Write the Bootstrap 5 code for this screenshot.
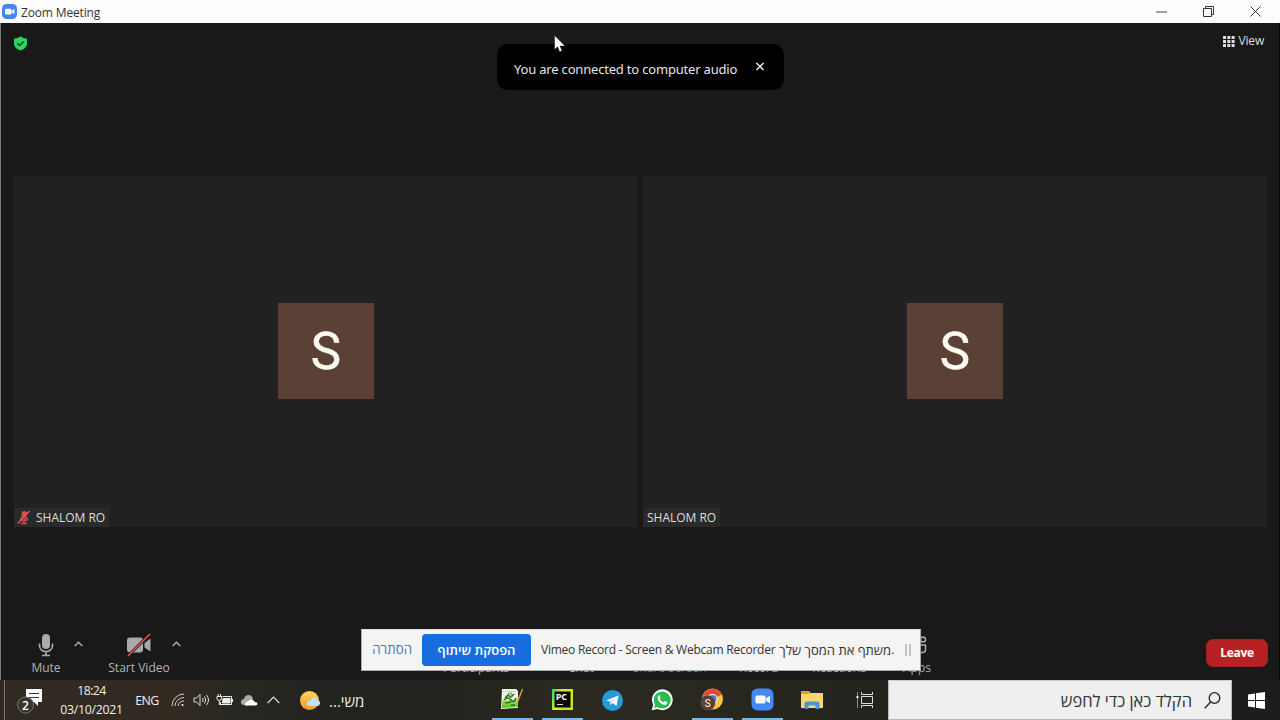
<!DOCTYPE html>
<html lang="en">
<head>
<meta charset="utf-8">
<meta name="viewport" content="width=device-width, initial-scale=1">
<title>Zoom Meeting</title>
<link href="https://cdn.jsdelivr.net/npm/bootstrap@5.3.0/dist/css/bootstrap.min.css" rel="stylesheet">
<style>
body{width:1280px;height:720px;overflow:hidden;background:#191919;font-family:"Open Sans","Noto Sans","Liberation Sans",sans-serif;font-size:12px;line-height:1}
svg{display:block;flex:none}
.titlebar{height:23px;background:#fdfdfd;color:#333;padding:0 1px 0 2px}
.titlebar .caption{font-size:12px;letter-spacing:-.15px;margin-left:4px;padding-top:2px}
.win-btn{width:47px}
.meeting{height:657px;background:#191919;border-left:1px solid #77787c;border-right:1px solid #050505}
.meet-head{height:153px;padding:12px 15px 0 12px}
.view-btn{height:12px;color:#ddd;font-size:12px;letter-spacing:-.2px}
.gallery{height:351px;padding:0 12px 0 13px;gap:5px}
.tile{background:#212121}
.avatar{width:96px;height:96px;margin-bottom:1px;background:#5b4036;color:#fffaf2;font:51px/98px Roboto,sans-serif;-webkit-text-stroke:.5px #fffaf2;text-align:center}
.tag{height:19px;background:#2a2a2a;color:#ddd;font-size:12px;letter-spacing:-.02px;padding:0 4px}
.controls{height:153px;padding:0 11px 5px 13px}
.ctl{color:#b4b4b4;font-size:12px;font-weight:500}
.ctl .lbl{height:13px;letter-spacing:.02px;white-space:nowrap}
.leave{width:62px;height:28px;background:#b62124;border:1px solid #a02022;border-radius:7px;color:#fff;font-size:12px;font-weight:700;line-height:1;margin-bottom:8px;letter-spacing:-.3px}
.notice{left:497px;top:44px;width:287px;height:46px;background:#000;border-radius:11px;color:#e4e4e4;font-family:"Noto Sans",sans-serif;font-size:13px;letter-spacing:-.19px;padding-left:17px}
.notice .msg{width:232px;padding-top:4px;white-space:nowrap}
.pointer{left:554px;top:35px}
.covered{left:440px;top:660px;width:500px;height:16px;color:#aaa;font-size:12px}
.covered span{position:absolute;top:2px;white-space:nowrap}
.sharebar{left:361px;top:629px;width:560px;height:42px;background:#f4f4f4;border:1px solid #aaa;border-top-color:#ddd;color:#333;padding-left:10px;font-size:12px}
.hide-link{color:#4a76c2;width:40px;font-size:13.3px;white-space:nowrap}
.stop-btn{width:109px;height:32px;margin-left:10px;background:#176ce0;border-radius:4px;color:#fff;font-size:13px;font-weight:600;white-space:nowrap}
.share-text{margin-left:10px;width:354px;white-space:nowrap}
.share-text .en{letter-spacing:-.24px}
.share-text .he{font-size:13px}
.taskbar{height:40px;color:#eee;background:linear-gradient(90deg,#302a23,#332b22 13%,#292721 18%,#21231f 26%,#222420 32%,#26251e 39%,#2c2921 46%,#29281f 55%,#23241e 67%,#1c1e1d 96%,#1c1e1e)}
.cell{flex:none;display:flex;align-items:center;justify-content:center;height:40px}
.app{width:50px;padding:0}
.running{border-bottom:2px solid #76b9ed;width:41px;margin:0 4.5px}
.search{width:344px;height:40px;background:#efefef;border:1px solid #b8b8b8;border-top-color:#ccc;color:#333;padding-right:10px;font-size:16.5px}
</style>
</head>
<body class="position-relative">
<header class="titlebar d-flex align-items-center">
  <svg width="15" height="15" viewBox="0 0 15 15"><rect width="15" height="15" rx="4.5" fill="#4287f0"/><rect x="3" y="4.7" width="6.5" height="5.8" rx="1.2" fill="#fff"/><path d="M10 6.7l2.4-1.6v5L10 8.6z" fill="#fff"/></svg>
  <span class="caption me-auto">Zoom Meeting</span>
  <div class="win-btn d-flex justify-content-center"><svg width="11" height="11"><path d="M0 6h11" stroke="#444"/></svg></div>
  <div class="win-btn d-flex justify-content-center"><svg width="11" height="11" fill="none" stroke="#333"><path d="M.5 2.5h8v8h-8zM2.5 2.5v-2h8v8h-2"/></svg></div>
  <div class="win-btn d-flex justify-content-center"><svg width="11" height="11" stroke="#333"><path d="M.5.5l10 10m0-10l-10 10"/></svg></div>
</header>

<main class="meeting">
  <div class="meet-head d-flex justify-content-between align-items-start">
    <svg width="15" height="17" viewBox="0 0 15 17"><path d="M7.500 1.300Q10 3.500 14 3.800V8.700c0 3.200-3.200 5.600-6.500 6.800C4.200 14.300 1 11.900 1 8.700V3.800Q5 3.500 7.500 1.300z" fill="#2bd45d"/><path d="M4.300 8.300l2.300 2.200 4.200-4" fill="none" stroke="#0b481e" stroke-width="1.600"/></svg>
    <div class="view-btn d-flex align-items-center">
      <svg width="12" height="11" fill="#ddd"><path d="M0 0h3v3H0zM4.300 0h3v3h-3zM8.600 0h3v3h-3zM0 4h3v3H0zM4.300 4h3v3h-3zM8.600 4h3v3h-3zM0 8h3v3H0zM4.300 8h3v3h-3zM8.600 8h3v3h-3z"/></svg>
      <span class="ms-1">View</span>
    </div>
  </div>

  <section class="gallery d-flex">
    <div class="tile flex-fill position-relative d-flex align-items-center justify-content-center">
      <div class="avatar">S</div>
      <div class="tag position-absolute start-0 bottom-0 d-flex align-items-center" style="padding-left:3px!important"><svg style="margin-right:5px" width="14" height="15" viewBox="0 0 14 15"><rect x="4.500" y="1" width="5.500" height="9" rx="2.700" fill="#d94b53"/><path d="M3.500 8c0 4 7 4 7 0M7 11v2.500M4 13.500h6" fill="none" stroke="#d94b53" stroke-width="1.300"/><path d="M1.600 14L13.200 2" stroke="#2a2a2a" stroke-width="1"/><path d="M.8 13.500L12.500 1" stroke="#f05961" stroke-width="1.400"/></svg>SHALOM RO</div>
    </div>
    <div class="tile flex-fill position-relative d-flex align-items-center justify-content-center">
      <div class="avatar">S</div>
      <div class="tag position-absolute start-0 bottom-0 d-flex align-items-center">SHALOM RO</div>
    </div>
  </section>

  <section class="controls d-flex align-items-end">
    <div class="ctl d-flex flex-column align-items-center" style="width:64px">
      <svg width="16" height="24" viewBox="0 0 16 24"><rect x="4" y="0" width="8" height="15" rx="4" fill="#aaa"/><path d="M1.500 9.500v2c0 8 13 8 13 0v-2M8 17.500v4M4 21.500h8" fill="none" stroke="#aaa" stroke-width="1.700"/></svg>
      <span class="lbl mt-1">Mute</span>
    </div>
    <svg style="margin:0 4px 28px -4px" width="9" height="6"><path d="M.7 5L4.500 1.200 8.300 5" fill="none" stroke="#aaa" stroke-width="1.500"/></svg>
    <div class="ctl d-flex flex-column align-items-center" style="width:84px;margin-left:10px">
      <svg width="26" height="25" viewBox="0 0 26 25"><rect x="1" y="4.500" width="16" height="15" rx="3" fill="#aaa"/><path d="M18.500 10l6-4.500v13l-6-4z" fill="#aaa"/><path d="M2 23L24 1" stroke="#191919" stroke-width="3"/><path d="M2 23L24 1" stroke="#e04c50" stroke-width="1.700"/></svg>
      <span class="lbl mt-1">Start Video</span>
    </div>
    <svg style="margin:0 auto 28px -9px" width="9" height="6"><path d="M.7 5L4.500 1.200 8.300 5" fill="none" stroke="#aaa" stroke-width="1.500"/></svg>
    <button class="leave btn p-0" type="button">Leave</button>
  </section>
</main>

<!-- labels partly hidden under the sharing bar -->
<div class="covered position-absolute">
  <span style="left:3px">Participants</span><span style="left:128px">Chat</span><span style="left:193px;color:#22ad4d">Share Screen</span><span style="left:299px">Record</span><span style="left:372px">Reactions</span><span style="left:463px">Apps</span>
</div>
<svg class="position-absolute" style="left:908px;top:636px" width="20" height="20" fill="none" stroke="#aaa" stroke-width="1.500"><circle cx="15" cy="3.500" r="2.500"/><path d="M12 9h5.500v4.500q0 3-3 3h-3"/></svg>

<div class="sharebar position-absolute d-flex align-items-center">
  <span class="hide-link" dir="rtl">הסתרה</span>
  <div class="stop-btn d-flex align-items-center justify-content-center" dir="rtl">הפסקת שיתוף</div>
  <div class="share-text d-flex align-items-center" dir="ltr"><span class="en">Vimeo Record - Screen &amp; Webcam Recorder</span><span class="he ms-1" dir="rtl">משתף את המסך שלך</span><span>.</span></div>
  <svg width="6" height="12" fill="#c3c3c3" style="margin-left:10px"><path d="M0 0h2v12H0zM4 0h2v12H4z"/></svg>
</div>

<div class="notice position-absolute d-flex align-items-center">
  <span class="msg">You are connected to computer audio</span>
  <svg class="ms-2" width="16" height="10"><path d="M2.500 1l7 7m0-7l-7 7" stroke="#eee" stroke-width="1.500"/></svg>
</div>
<svg class="pointer position-absolute" width="12" height="18"><path d="M.6.500v14l3-2.800 2 5 2.400-1-2-4.800H11z" fill="#fff" stroke="#111" stroke-width=".4"/></svg>

<footer class="taskbar d-flex align-items-center">
  <div class="cell" style="width:5px;border-right:1px solid #77736d"></div>
  <div class="cell" style="width:50px"><svg width="26" height="27" viewBox="0 0 26 27"><path d="M9 2h16v13h-4v4l-4-4H9z" fill="#fff"/><path d="M12 6.500h10M12 10.500h10" stroke="#333"/><circle cx="8.500" cy="18" r="8" fill="#37332e" stroke="#77736d"/><text x="8.500" y="22.500" text-anchor="middle" font-size="12" font-weight="600" fill="#fff">2</text></svg></div>
  <div class="cell flex-column" style="width:73px"><span class="clock" style="margin-bottom:6px;margin-top:1px;font-size:12.300px;letter-spacing:-.6px">18:24</span><span class="clock" style="font-size:12.300px;letter-spacing:-.3px">03/10/2021</span></div>
  <div class="cell" style="width:38px;letter-spacing:-.5px;font-size:12.400px;padding-top:2px">ENG</div>
  <div class="cell" style="width:24px"><svg width="14" height="14" viewBox="0 0 14 14" fill="none" stroke="#ccc"><path d="M1 13A12 12 0 0 1 13 1M4 13A9 9 0 0 1 13 4.500M7 13a6 6 0 0 1 6-5"/><circle cx="11.500" cy="12" r="1" fill="#fff" stroke="none"/></svg></div>
  <div class="cell" style="width:23px"><svg width="17" height="14" viewBox="0 0 17 14" fill="none" stroke="#ddd"><path d="M1 5h2.500L7 1.500v11L3.500 9H1zM9.500 5q1.200 2 0 4M11.500 3.500q2.500 3.500 0 7M13.500 2q4 5 0 10"/></svg></div>
  <div class="cell" style="width:24px"><svg width="18" height="13" viewBox="0 0 18 13" fill="none" stroke="#eee"><path d="M6.500 2.500h9v8h-11V8M16.500 5v3M1 2.500h4.500v2q0 2-2.200 2T1 4.500zM2.200 0v2M4.500 0v2M3.300 7v3.500H5"/><path d="M7 4.500h7v4.500H6.500z" fill="#eee"/></svg></div>
  <div class="cell" style="width:24px"><svg width="18" height="12" viewBox="0 0 18 12"><path d="M1 8Q1 5 4 5 5 1 8.500 1T13 5L6 11H4Q1 11 1 8z" fill="#aaa"/><path d="M5 11Q5 7.500 8 7.500 10 4.500 13 6q1 .5 1.500 2 3-.2 3 1.700T15 11.500H7Q5 12 5 11z" fill="#fff"/></svg></div>
  <div class="cell" style="width:24px"><svg width="13" height="8"><path d="M.7 7L6.500 1.200 12.300 7" fill="none" stroke="#ddd" stroke-width="1.200"/></svg></div>
  <div class="cell justify-content-start" style="width:202px;padding-left:15px"><svg width="21" height="21" viewBox="0 0 21 21"><defs><linearGradient id="sun" x2="0" y2="1"><stop stop-color="#ffd45b"/><stop offset="1" stop-color="#f29c2b"/></linearGradient></defs><circle cx="9.500" cy="10.500" r="9.500" fill="url(#sun)"/><path d="M9.500 16q-3-.5-2.500-3t3.500-2.200Q12 6 15.500 7.500q2 1 2 3 3 .3 2.500 3T17 16z" fill="#b9e3f6"/></svg><span class="wtext" style="font-size:15px;margin-left:8px;padding-top:3px">...משי</span></div>

  <div class="cell app running"><svg width="24" height="22" viewBox="0 0 24 22"><defs><linearGradient id="npp" x2="0" y2="1"><stop stop-color="#b9ee73"/><stop offset="1" stop-color="#54bd14"/></linearGradient></defs><path d="M2 1h14l2 2v17l-17 1z" fill="#edf4e7"/><path d="M2 12l16-1v8L2 20z" fill="url(#npp)"/><path d="M5 10l3-3 3 2 3-3M4 12q4-4 7 0t5-2M5 15l6-1M11 17h4" stroke="#276b20" stroke-width="1.500" fill="none"/><circle cx="10" cy="7" r="2" fill="none" stroke="#4c8c38"/><path d="M3 3.500h13" stroke="#aaa" stroke-dasharray="1 1"/><path d="M22.500 1l-5 13" stroke="#d79b35" stroke-width="1.500"/></svg></div>
  <div class="cell app running"><svg width="21" height="21" viewBox="0 0 21 21"><defs><linearGradient id="pc" x2="1" y2=".4"><stop stop-color="#22d66b"/><stop offset=".45" stop-color="#d9ee23"/><stop offset="1" stop-color="#c5e51c"/></linearGradient></defs><rect width="21" height="21" fill="url(#pc)"/><rect x="2.500" y="2.500" width="16" height="16" fill="#050805"/><text x="3.700" y="10.800" font-size="9" font-weight="700" fill="#fff">PC</text><path d="M5 15.500h6" stroke="#ddd"/></svg></div>
  <div class="cell app"><svg width="21" height="21" viewBox="0 0 21 21"><circle cx="10.500" cy="10.500" r="10.500" fill="#279bd5"/><path d="M4 10.500L16.500 5.500l-2 10.500-4-3-2 2-.5-3.500z" fill="#fff"/><path d="M8 11.500l6-4-4.500 5-.8 2.500z" fill="#b8d8e9"/></svg></div>
  <div class="cell app"><svg width="22" height="22" viewBox="0 0 22 22"><path d="M.7 21.300l1.500-5.500A10.400 10.400 0 1 1 6.500 20z" fill="#fff"/><circle cx="11.200" cy="11" r="8.600" fill="#29bd4e"/><path d="M3 19l1.300-4.500 3 3z" fill="#29bd4e"/><path d="M8.500 6l1.200 2.700-1 1.300q1.200 2.300 3.700 3.300l1.200-1.300 2.700 1.300q0 2.700-2.800 2.700Q7 14.500 6.500 8.500 6.500 6.500 8.500 6z" fill="#fff"/></svg></div>
  <div class="cell app running"><svg width="25" height="24" viewBox="0 0 25 24"><circle cx="12.500" cy="12" r="10.500" fill="#f8c941"/><path d="M12.500 12L3 7.500a10.500 10.500 0 0 1 19 0z" fill="#df4b3d"/><path d="M3.200 7A10.500 10.500 0 0 0 11 22.500l3-6z" fill="#35a853"/><circle cx="12.500" cy="12" r="5" fill="#fff"/><circle cx="12.500" cy="12" r="4" fill="#3b7ddd"/><circle cx="7.700" cy="16" r="7.500" fill="#5b4036"/><text x="7.700" y="19.800" text-anchor="middle" font-family="Roboto" font-size="10" fill="#fff">S</text></svg></div>
  <div class="cell app running"><svg width="23" height="23" viewBox="0 0 23 23"><rect x=".5" y=".5" width="22" height="22" rx="6" fill="#438af4"/><rect x="4.500" y="7.500" width="10" height="8" rx="1.700" fill="#fff"/><path d="M15 10.300l4-2.500v7.500l-4-2.500z" fill="#fff"/></svg></div>
  <div class="cell app"><svg width="22" height="20" viewBox="0 0 22 20"><path d="M0 1h8l2 2h12v5H0z" fill="#dba12b"/><path d="M0 4h8l2-1h12v15H0z" fill="#fcd670"/><path d="M3.500 19v-5.500q0-2 2-2h11q2 0 2 2V19h-4v-3.500h-7V19z" fill="#4397d2"/></svg></div>
  <div class="cell" style="width:51px;padding-left:4px"><svg width="18" height="18" viewBox="0 0 18 18" fill="none" stroke="#ddd"><path d="M1.500 1v16" stroke="#888"/><path d="M1.500 5v2" stroke="#fff" stroke-width="2"/><path d="M5.500 1v2.500h11V1M5.500 17v-2.500h11V17M5.500 5.500h11v7h-11z"/></svg></div>
  <div class="search d-flex align-items-center justify-content-end"><span class="stext" dir="rtl" style="margin-right:12px;padding-top:2px">הקלד כאן כדי לחפש</span><svg width="17" height="17" fill="none" stroke="#222" stroke-width="1.300"><circle cx="10.500" cy="6" r="5.300"/><path d="M6.700 10L.7 16.200"/></svg></div>
  <div class="cell" style="width:48px"><svg width="17" height="17" viewBox="0 0 17 17" fill="#fff"><path d="M0 2.500l7-1v6.500H0zM8 1.300L17 0v8H8zM0 9h7v6.500l-7-1zM8 9h9v8l-9-1.300z"/></svg></div>
</footer>
</body>
</html>
